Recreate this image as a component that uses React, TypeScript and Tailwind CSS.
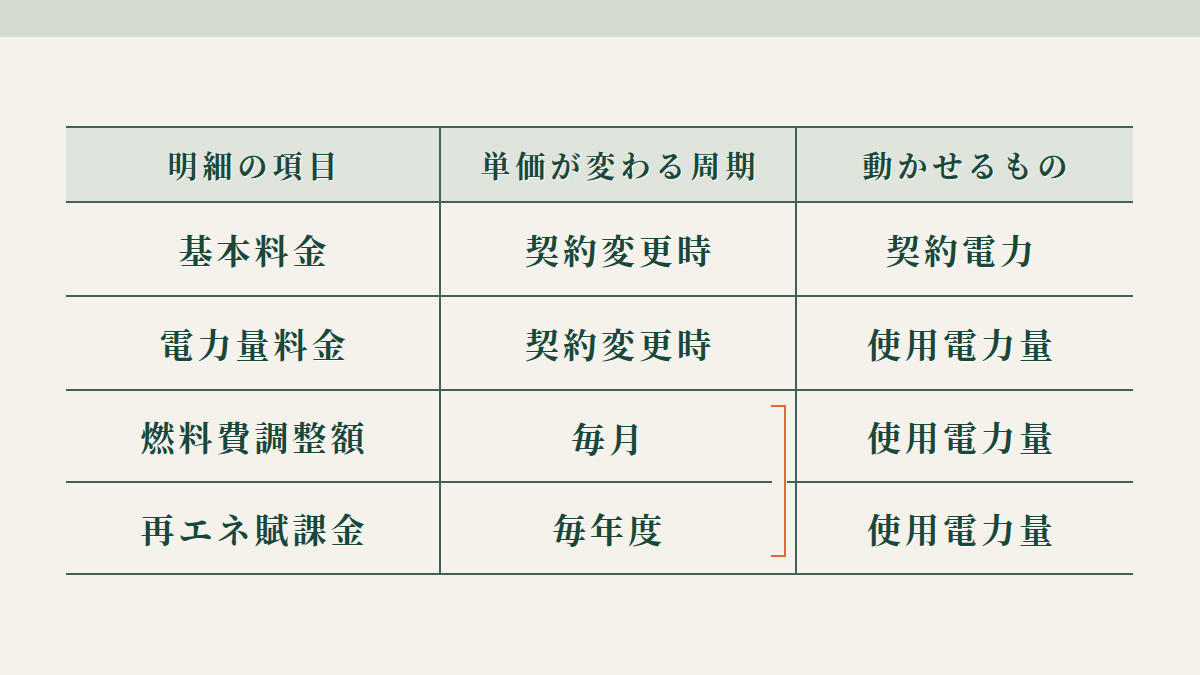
import React from "react";

const FONT =
  '"Noto Serif CJK JP", "Noto Serif JP", "Noto Sans CJK JP", "Noto Sans CJK SC", serif';

type Row = [string, string, string];

const rows: Row[] = [
  ["基本料金", "契約変更時", "契約電力"],
  ["電力量料金", "契約変更時", "使用電力量"],
  ["燃料費調整額", "毎月", "使用電力量"],
  ["再エネ賦課金", "毎年度", "使用電力量"],
];

const rowH = ["h-[94px]", "h-[94px]", "h-[92px]", "h-[92px]"];

export default function App() {
  return (
    <div
      className="w-[1200px] h-[675px] bg-[#f4f2eb] overflow-hidden flex flex-col"
      style={{ fontFamily: FONT }}
    >
      <div className="h-[37px] bg-[#d3dbd1] shrink-0" />
      <div className="pt-[89px] pl-[66px]">
        <div className="w-[1067px] grid grid-cols-[375px_356px_336px] border-t-2 border-[#3f6358] text-[#19483a] font-bold [text-shadow:1px_1px_0_rgba(255,255,255,0.85)]">
          {["明細の項目", "単価が変わる周期", "動かせるもの"].map((h, i) => (
            <div
              key={h}
              className={`h-[75px] bg-[#dfe5dc] border-b-2 border-[#3f6358] flex items-center justify-center text-[30px] tracking-[5px] pl-[5px] ${
                i < 2 ? "border-r-2" : ""
              }`}
            >
              {h}
            </div>
          ))}
          {rows.map((r, ri) =>
            r.map((c, ci) => {
              const special = ri === 2 && ci === 1;
              const shifted = ri >= 2 && ci === 1;
              const pad = shifted
                ? "pr-[18px]"
                : ci === 2
                ? "pr-[6px]"
                : "pl-[4px]";
              return (
                <div
                  key={`${ri}-${ci}`}
                  className={`${rowH[ri]} relative flex items-center justify-center text-[34px] tracking-[4px] border-[#3f6358] ${
                    ci < 2 ? "border-r-2" : ""
                  } ${special ? "" : "border-b-2"} ${pad}`}
                >
                  {c}
                  {special && (
                    <>
                      <div className="absolute left-0 bottom-0 w-[331px] h-[2px] bg-[#3f6358]" />
                      <div className="absolute right-0 bottom-0 w-[8px] h-[2px] bg-[#3f6358]" />
                      <div className="absolute left-[330px] top-[14px] w-[15px] h-[152px] border-t-2 border-r-2 border-b-2 border-[#e0683a]" />
                    </>
                  )}
                </div>
              );
            })
          )}
        </div>
      </div>
    </div>
  );
}
